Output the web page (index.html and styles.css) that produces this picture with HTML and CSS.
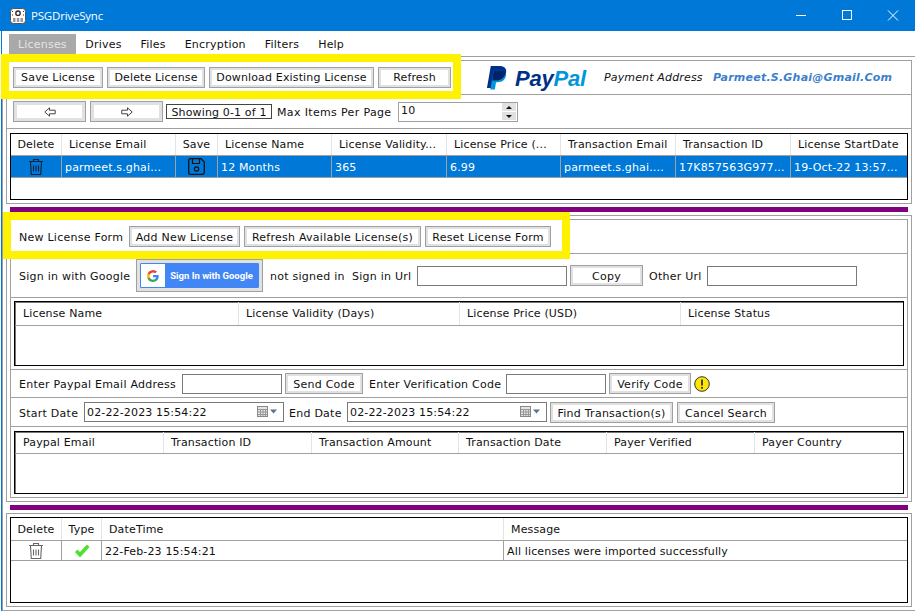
FILE: index.html
```html
<!DOCTYPE html>
<html lang="en">
<head>
  <meta charset="UTF-8" />
  <title>PSGDriveSync</title>
  <link rel="stylesheet" href="styles.css">
</head>
<body>
  <svg class="defs" width="0" height="0">
    <symbol id="trash" viewBox="0 0 16 18">
      <path d="M1 3.5h14M5.5 3V1.5h5V3M2.5 4l.8 12.5h9.4L13.500 4" fill="none" stroke="currentColor" stroke-width="1.1"/>
      <path d="M5.5 7.5v6M8 7.5v6M10.5 7.5v6" fill="none" stroke="currentColor" stroke-width="1.1"/>
    </symbol>
  </svg>

  <div class="window">
    <div class="titlebar">
      <svg class="app-icon" viewBox="0 0 16 16">
        <rect x="0.5" y="0.5" width="15" height="15" rx="3" fill="#fff" stroke="#555"/>
        <circle cx="8" cy="5.2" r="2.2" fill="none" stroke="#333" stroke-width="1.4"/>
        <path d="M2 3.5h1M13 3.500h1M2 7h1M13 7h1" stroke="#333"/>
        <path d="M3 11h2.500M6.800 11h2.500M10.500 11h2.500M3 13h2.500M6.800 13h2.500M10.500 13h2.500" stroke="#333" stroke-width="1.2"/>
      </svg>
      <span class="app-name">PSGDriveSync</span>
      <div class="window-controls">
        <svg viewBox="0 0 46 31" class="win-btn"><path d="M18 15.5h10" stroke="#fff" fill="none"/></svg>
        <svg viewBox="0 0 46 31" class="win-btn"><rect x="18.5" y="10.5" width="9" height="9" stroke="#fff" fill="none"/></svg>
        <svg viewBox="0 0 46 31" class="win-btn"><path d="M18 10.5l10 10M28 10.5l-10 10" stroke="#fff" fill="none"/></svg>
      </div>
    </div>

    <div class="client">
      <div class="menubar">
        <span class="menu-item active">Licenses</span>
        <span class="menu-item">Drives</span>
        <span class="menu-item">Files</span>
        <span class="menu-item">Encryption</span>
        <span class="menu-item">Filters</span>
        <span class="menu-item">Help</span>
      </div>

      <div class="tabpage">
        <!-- licenses -->
        <div class="pane pane-top">
          <div class="row row-tools">
            <button class="btn w90">Save License</button>
            <button class="btn w98">Delete License</button>
            <button class="btn w165">Download Existing License</button>
            <button class="btn w73">Refresh</button>
            <div class="paypal">
              <svg class="pp-mark" viewBox="0 0 22 25">
                <path d="M5 0h9c5 0 8 2.5 7 7-1 5-4 8-9 8H9l-1.500 8H1z" fill="#003087"/>
                <path d="M8 5h9c3 .5 4.500 2.500 4 5-1 4.500-4 7-8.500 7h-2l-1.200 7.500H4.500L8 5z" fill="#0096d9"/>
                <path d="M8 5h9c1.500.3 2.700.8 3.500 1.800C20 11.800 16 15 12 15H9l-2.500.2L8 5z" fill="#012169"/>
              </svg>
              <span class="pp-word"><span class="pp-pay">Pay</span><span class="pp-pal">Pal</span></span>
              <span class="pp-label">Payment Address</span>
              <span class="pp-mail">Parmeet.S.Ghai@Gmail.Com</span>
            </div>
          </div>
          <div class="row row-pager">
            <button class="btn btn-nav">
              <svg viewBox="0 0 12 10" class="nav-arrow"><path d="M.8 5L5.500.8v2.400h5.700v3.600H5.500v2.400z" fill="#fff" stroke="#444"/></svg>
            </button>
            <button class="btn btn-nav">
              <svg viewBox="0 0 12 10" class="nav-arrow"><path d="M11.200 5L6.500.8v2.400H.8v3.600h5.700v2.400z" fill="#fff" stroke="#444"/></svg>
            </button>
            <span class="showing">Showing 0-1 of 1</span>
            <span class="max-label">Max Items Per Page</span>
            <div class="numeric">
              <span class="numeric-value">10</span>
              <div class="spin">
                <span class="spin-btn"><i class="tri-up"></i></span>
                <span class="spin-btn"><i class="tri-down"></i></span>
              </div>
            </div>
          </div>
          <div class="grid grid-top">
            <div class="gr gr-head cols-lic">
              <span class="center">Delete</span><span>License Email</span><span class="center">Save</span><span>License Name</span><span>License Validity...</span><span>License Price (...</span><span>Transaction Email</span><span>Transaction ID</span><span>License StartDate</span>
            </div>
            <div class="gr gr-body selected cols-lic">
              <span class="center"><svg class="ico-trash ico-dark"><use href="#trash"/></svg></span>
              <span>parmeet.s.ghai...</span>
              <span class="center">
                <svg class="ico-save" viewBox="0 0 17 17">
                  <path d="M2.500.7h10.500l3.300 3.300v10.500a1.800 1.800 0 0 1-1.800 1.800H2.500a1.800 1.800 0 0 1-1.800-1.800V2.500A1.800 1.800 0 0 1 2.500.7z" fill="none" stroke="#111" stroke-width="1.3"/>
                  <path d="M4.500 1v4.500h7V1" fill="none" stroke="#111" stroke-width="1.2"/>
                  <circle cx="8.500" cy="11" r="2.2" fill="none" stroke="#111" stroke-width="1.2"/>
                </svg>
              </span>
              <span>12 Months</span><span>365</span><span>6.99</span><span>parmeet.s.ghai....</span><span>17K857563G977...</span><span>19-Oct-22 13:57...</span>
            </div>
          </div>
        </div>

        <div class="splitter"></div>

        <!-- new license form -->
        <div class="pane pane-mid">
          <div class="inner">
            <div class="row row-form">
              <span class="lbl lbl-form">New License Form</span>
              <button class="btn w111">Add New License</button>
              <button class="btn w177">Refresh Available License(s)</button>
              <button class="btn w126">Reset License Form</button>
            </div>
            <div class="row row-google">
              <span class="lbl lbl-google">Sign in with Google</span>
              <button class="btn-google">
                <span class="g-face">
                  <span class="g-box">
                    <svg viewBox="0 0 18 18" class="g-logo">
                      <path d="M17.600 9.200c0-.6-.1-1.200-.2-1.800H9v3.500h4.800a4.100 4.100 0 0 1-1.800 2.700v2.200h2.900c1.700-1.600 2.700-3.900 2.700-6.600z" fill="#4285f4"/>
                      <path d="M9 18c2.400 0 4.500-.8 5.900-2.200L12 13.600c-.8.500-1.800.9-3 .9-2.300 0-4.300-1.600-5-3.700H1v2.300A9 9 0 0 0 9 18z" fill="#34a853"/>
                      <path d="M4 10.700a5.400 5.400 0 0 1 0-3.400V5H1a9 9 0 0 0 0 8z" fill="#fbbc05"/>
                      <path d="M9 3.600c1.300 0 2.500.5 3.400 1.300L15 2.400A9 9 0 0 0 1 5l3 2.300c.7-2.100 2.700-3.700 5-3.700z" fill="#ea4335"/>
                    </svg>
                  </span>
                  <span class="g-text">Sign In with Google</span>
                </span>
              </button>
              <span class="lbl lbl-status">not signed in</span>
              <span class="lbl lbl-url">Sign in Url</span>
              <span class="input input-url"></span>
              <button class="btn w73">Copy</button>
              <span class="lbl lbl-other">Other Url</span>
              <span class="input input-url"></span>
            </div>
            <div class="grid grid-avail">
              <div class="gr gr-head cols-avail">
                <span>License Name</span><span>License Validity (Days)</span><span>License Price (USD)</span><span>License Status</span>
              </div>
            </div>
            <div class="row row-verify">
              <span class="lbl lbl-pay">Enter Paypal Email Address</span>
              <span class="input input-code"></span>
              <button class="btn w78">Send Code</button>
              <span class="lbl lbl-code">Enter Verification Code</span>
              <span class="input input-code"></span>
              <button class="btn w82">Verify Code</button>
              <svg class="ico-warn" viewBox="0 0 16 16">
                <circle cx="8" cy="8" r="7.300" fill="#ffe600" stroke="#333" stroke-width="1"/>
                <path d="M8 3.500v6" stroke="#333" stroke-width="1.800"/>
                <circle cx="8" cy="11.800" r="1.100" fill="#333"/>
              </svg>
            </div>
            <div class="row row-dates">
              <span class="lbl lbl-start">Start Date</span>
              <div class="date">
                <span>02-22-2023 15:54:22</span>
                <svg class="ico-cal" viewBox="0 0 20 12">
                  <rect x="0.5" y="0.5" width="10" height="10" fill="#e4e4e4" stroke="#888"/>
                  <path d="M1 3.500h9M1 6h9M1 8.500h9M3.500 3v7M6 3v7M8.500 3v7" stroke="#999" stroke-width="1"/>
                  <path d="M13 3.500h7l-3.500 4z" fill="#5b7391"/>
                </svg>
              </div>
              <span class="lbl lbl-end">End Date</span>
              <div class="date">
                <span>02-22-2023 15:54:22</span>
                <svg class="ico-cal" viewBox="0 0 20 12">
                  <rect x="0.5" y="0.5" width="10" height="10" fill="#e4e4e4" stroke="#888"/>
                  <path d="M1 3.500h9M1 6h9M1 8.500h9M3.500 3v7M6 3v7M8.500 3v7" stroke="#999" stroke-width="1"/>
                  <path d="M13 3.500h7l-3.500 4z" fill="#5b7391"/>
                </svg>
              </div>
              <button class="btn w123">Find Transaction(s)</button>
              <button class="btn w98">Cancel Search</button>
            </div>
            <div class="grid grid-trans">
              <div class="gr gr-head cols-trans">
                <span>Paypal Email</span><span>Transaction ID</span><span>Transaction Amount</span><span>Transaction Date</span><span>Payer Verified</span><span>Payer Country</span>
              </div>
            </div>
          </div>
        </div>

        <div class="splitter"></div>

        <!-- log -->
        <div class="pane pane-log">
          <div class="grid grid-log">
            <div class="gr gr-head cols-log">
              <span class="center">Delete</span><span class="center">Type</span><span>DateTime</span><span>Message</span>
            </div>
            <div class="gr gr-body cols-log">
              <span class="center"><svg class="ico-trash ico-grey"><use href="#trash"/></svg></span>
              <span class="center">
                <svg class="ico-check" viewBox="0 0 16 14"><path d="M1 8l2.500-2.500L6 8l7-7.500 2.500 2.500L6 13.500z" fill="#4fe02f"/></svg>
              </span>
              <span>22-Feb-23 15:54:21</span><span>All licenses were imported successfully</span>
            </div>
          </div>
        </div>
      </div>
    </div>

    <div class="mark mark-top"></div>
    <div class="mark mark-form"></div>
  </div>
</body>
</html>
```

FILE: styles.css
```css
* {
  box-sizing: border-box;
}
html, body {
  margin: 0;
  background: #fff;
}
body {
  font-family: "DejaVu Sans", Verdana, sans-serif;
  font-size: 11px;
  letter-spacing: 0.15px;
  color: #111;
  overflow: hidden;
}
.defs {
  position: absolute;
}
.window {
  position: relative;
  width: 915px;
  height: 611px;
  overflow: hidden;
}

/* title bar */
.titlebar {
  display: flex;
  align-items: center;
  height: 31px;
  padding-left: 10px;
  background: #0078d7;
  color: #fff;
}
.app-icon {
  width: 16px;
  height: 16px;
}
.app-name {
  margin-left: 5px;
  font-family: "Open Sans", sans-serif;
  font-size: 11.5px;
  letter-spacing: -0.2px;
}
.window-controls {
  display: flex;
  margin-left: auto;
  margin-right: -1px;
}
.win-btn {
  width: 46px;
  height: 31px;
}

.client {
  margin-left: 1px;
  height: 580px;
  border-left: 1px solid #0078d7;
}

/* menu */
.menubar {
  display: flex;
  height: 25px;
  padding: 3px 0 0 7px;
  letter-spacing: 0.2px;
}
.menu-item {
  height: 20px;
  padding: 1px 9.5px 0;
  line-height: 20px;
}
.menu-item.active {
  margin-right: -0.5px;
  padding-left: 9px;
  background: #a9a9a9;
  color: #e4e4e4;
}

.tabpage {
  height: 555px;
  padding: 3px 3px 0 3px;
  border: solid #a0a0a0;
  border-width: 1px 0 1px 1px;
}
.pane {
  border: 1px solid #a0a0a0;
}
.pane-top {
  height: 144px;
}
.pane-mid {
  height: 287px;
  padding: 3px;
}
.pane-log {
  height: 94px;
  padding: 3px 2px 0 3px;
}
.inner {
  height: 279px;
  border: 1px solid #a0a0a0;
}
.splitter {
  height: 5px;
  margin: 3px 4px;
  background: #800080;
}

/* rows */
.row {
  display: flex;
  align-items: center;
  gap: 4px;
  border-bottom: 1px solid #a0a0a0;
}
.inner .row {
  letter-spacing: 0.25px;
}
.inner .lbl {
  padding-top: 2px;
}
.inner .btn {
  padding-top: 2px;
}
.row-tools,
.row-pager {
  height: 34px;
  padding-left: 6px;
}
.row-form {
  height: 34px;
  padding-left: 8px;
}
.row-google {
  height: 44px;
  padding-left: 8px;
}
.row-verify {
  height: 29px;
  padding-left: 8px;
  margin-top: 3px;
  border-top: 1px solid #a0a0a0;
}
.row-dates {
  height: 29px;
  padding-left: 8px;
}

/* labels hold the widths the form lays them out at */
.lbl {
  white-space: nowrap;
}
.lbl-form {
  width: 106px;
}
.lbl-google {
  width: 113px;
}
.lbl-status {
  width: 78px;
  margin-left: 3px;
}
.lbl-url {
  width: 61px;
}
.lbl-other {
  width: 54px;
  margin-left: 2px;
}
.lbl-pay {
  width: 159px;
}
.lbl-code {
  width: 131px;
  margin: 0 2px;
}
.lbl-start {
  width: 61px;
}
.lbl-end {
  width: 54px;
  margin-left: 1px;
}

/* buttons */
.btn {
  height: 21px;
  padding: 0;
  border: 1px solid #a0a0a0;
  background: #fff;
  box-shadow: inset 0 0 0 2px #e1e1e1;
  font: inherit;
  letter-spacing: inherit;
  color: inherit;
  white-space: nowrap;
}
.input + .btn,
.date + .btn {
  margin-left: -1px;
}
.w73 { width: 73px; }
.w78 { width: 78px; }
.w82 { width: 82px; }
.w90 { width: 90px; }
.w98 { width: 98px; }
.w111 { width: 111px; }
.w123 { width: 123px; }
.w126 { width: 126px; }
.w165 { width: 165px; }
.w177 { width: 177px; }
.btn-nav {
  display: flex;
  align-items: center;
  justify-content: center;
  width: 73px;
  box-shadow: inset 0 0 0 3px #e1e1e1;
}
.nav-arrow {
  width: 12px;
  height: 10px;
}

/* pager */
.showing {
  width: 106px;
  height: 15px;
  margin-left: -1px;
  line-height: 15px;
  text-align: center;
  white-space: nowrap;
  border: 1px solid #444;
}
.max-label {
  width: 115px;
  margin-left: 1px;
  margin-right: 2px;
  padding-top: 2px;
  letter-spacing: 0.35px;
  white-space: nowrap;
}
.numeric {
  display: flex;
  align-items: center;
  justify-content: space-between;
  width: 120px;
  height: 20px;
  padding: 0 1px 0 2px;
  border: 1px solid #a0a0a0;
}
.numeric-value {
  margin-top: -2px;
}
.spin {
  display: flex;
  flex-direction: column;
  gap: 1px;
}
.spin-btn {
  display: flex;
  align-items: center;
  justify-content: center;
  width: 14px;
  height: 8px;
  background: #e1e1e1;
}
.tri-up,
.tri-down {
  width: 0;
  height: 0;
  border-left: 3px solid transparent;
  border-right: 3px solid transparent;
}
.tri-up {
  border-bottom: 3px solid #111;
}
.tri-down {
  border-top: 3px solid #111;
}

/* paypal */
.paypal {
  display: flex;
  align-items: center;
  margin-left: 31px;
}
.pp-mark {
  width: 21px;
  height: 24px;
}
.pp-word {
  width: 77px;
  margin-left: 8px;
  padding-top: 2px;
  font-family: "Liberation Sans", sans-serif;
  font-size: 22px;
  font-weight: bold;
  font-style: italic;
  letter-spacing: -0.2px;
}
.pp-pay {
  color: #003087;
}
.pp-pal {
  color: #0096d9;
}
.pp-label {
  width: 109px;
  margin-left: 12px;
  font-style: italic;
  white-space: nowrap;
}
.pp-mail {
  font-weight: bold;
  font-style: italic;
  letter-spacing: 0.22px;
  color: #3b7fcb;
  white-space: nowrap;
}

/* data grids */
.grid {
  border: 1px solid #000;
  background: #fff;
}
.grid-top {
  width: 898px;
  height: 67px;
  margin: 4px 0 0 3px;
}
.grid-avail {
  width: 890px;
  height: 65px;
  margin: 3px 0 0 3px;
  box-shadow: inset 1px 1px 0 #777;
}
.grid-trans {
  width: 890px;
  height: 63px;
  margin: 4px 0 0 3px;
  box-shadow: inset 1px 1px 0 #777;
}
.grid-log {
  width: 898px;
  height: 86px;
}
.gr {
  display: grid;
  border-bottom: 1px solid #a0a0a0;
}
.gr span {
  display: flex;
  align-items: center;
  overflow: hidden;
  white-space: nowrap;
}
.gr-head {
  height: 22px;
}
.gr-head span {
  padding-left: 7px;
  border-right: 1px solid #e4e4e4;
}
.grid-avail .gr-head span:first-child,
.grid-trans .gr-head span:first-child {
  padding-left: 8px;
}
.gr-head span:last-child,
.gr-body span:last-child {
  border-right: none;
}
.gr-head .center,
.gr-body .center {
  justify-content: center;
  padding: 0;
}
.gr-body {
  height: 22px;
}
.gr-body span {
  padding: 2px 0 0 3px;
  border-right: 1px solid #a0a0a0;
}
.selected {
  background: #0078d7;
  color: #fff;
}
.cols-lic {
  grid-template-columns: 51px 114px 42px 114px 115px 114px 115px 115px 1fr;
}
.cols-avail {
  grid-template-columns: 224px 221px 221px 1fr;
}
.cols-trans {
  grid-template-columns: 149px 148px 147px 148px 148px 1fr;
}
.cols-log {
  grid-template-columns: 51px 40px 402px 1fr;
}
.grid-avail .gr-head {
  height: 24px;
}
.grid-log .gr-head {
  height: 23px;
}
.grid-log .gr-body {
  height: 20px;
}

/* icons */
.ico-trash {
  width: 16px;
  height: 18px;
}
.ico-dark {
  color: #123;
}
.ico-grey {
  color: #666;
}
.ico-save {
  width: 17px;
  height: 17px;
}
.ico-check {
  width: 16px;
  height: 14px;
}
.ico-warn {
  width: 16px;
  height: 16px;
  margin-left: -1px;
}

/* google button */
.btn-google {
  display: flex;
  width: 127px;
  height: 33px;
  padding: 3px;
  border: 1px solid #a0a0a0;
  background: #e1e1e1;
}
.g-face {
  display: flex;
  align-items: stretch;
  width: 100%;
  border: 1px solid #4285f4;
  background: #4285f4;
  border-radius: 1px;
}
.g-box {
  display: flex;
  align-items: center;
  justify-content: center;
  width: 24px;
  background: #fff;
}
.g-logo {
  width: 12px;
  height: 12px;
}
.g-text {
  margin: auto;
  font-family: Roboto, sans-serif;
  font-size: 9.5px;
  font-weight: bold;
  letter-spacing: 0;
  color: #fff;
}

/* inputs */
.input {
  display: block;
  height: 20px;
  border: 1px solid #7a7a7a;
  background: #fff;
}
.input-url {
  width: 150px;
}
.input-code {
  width: 100px;
}
.date {
  display: flex;
  align-items: center;
  justify-content: space-between;
  width: 200px;
  height: 20px;
  padding: 0 6px 0 2px;
  border: 1px solid #7a7a7a;
  letter-spacing: 0.15px;
}
.ico-cal {
  width: 20px;
  height: 12px;
}

/* yellow annotation boxes over the screenshot */
.mark {
  position: absolute;
  border: 8px solid #fff200;
  pointer-events: none;
}
.mark-top {
  left: 1px;
  top: 54px;
  width: 460px;
  height: 45px;
}
.mark-form {
  left: 3px;
  top: 212px;
  width: 567px;
  height: 47px;
}
```
